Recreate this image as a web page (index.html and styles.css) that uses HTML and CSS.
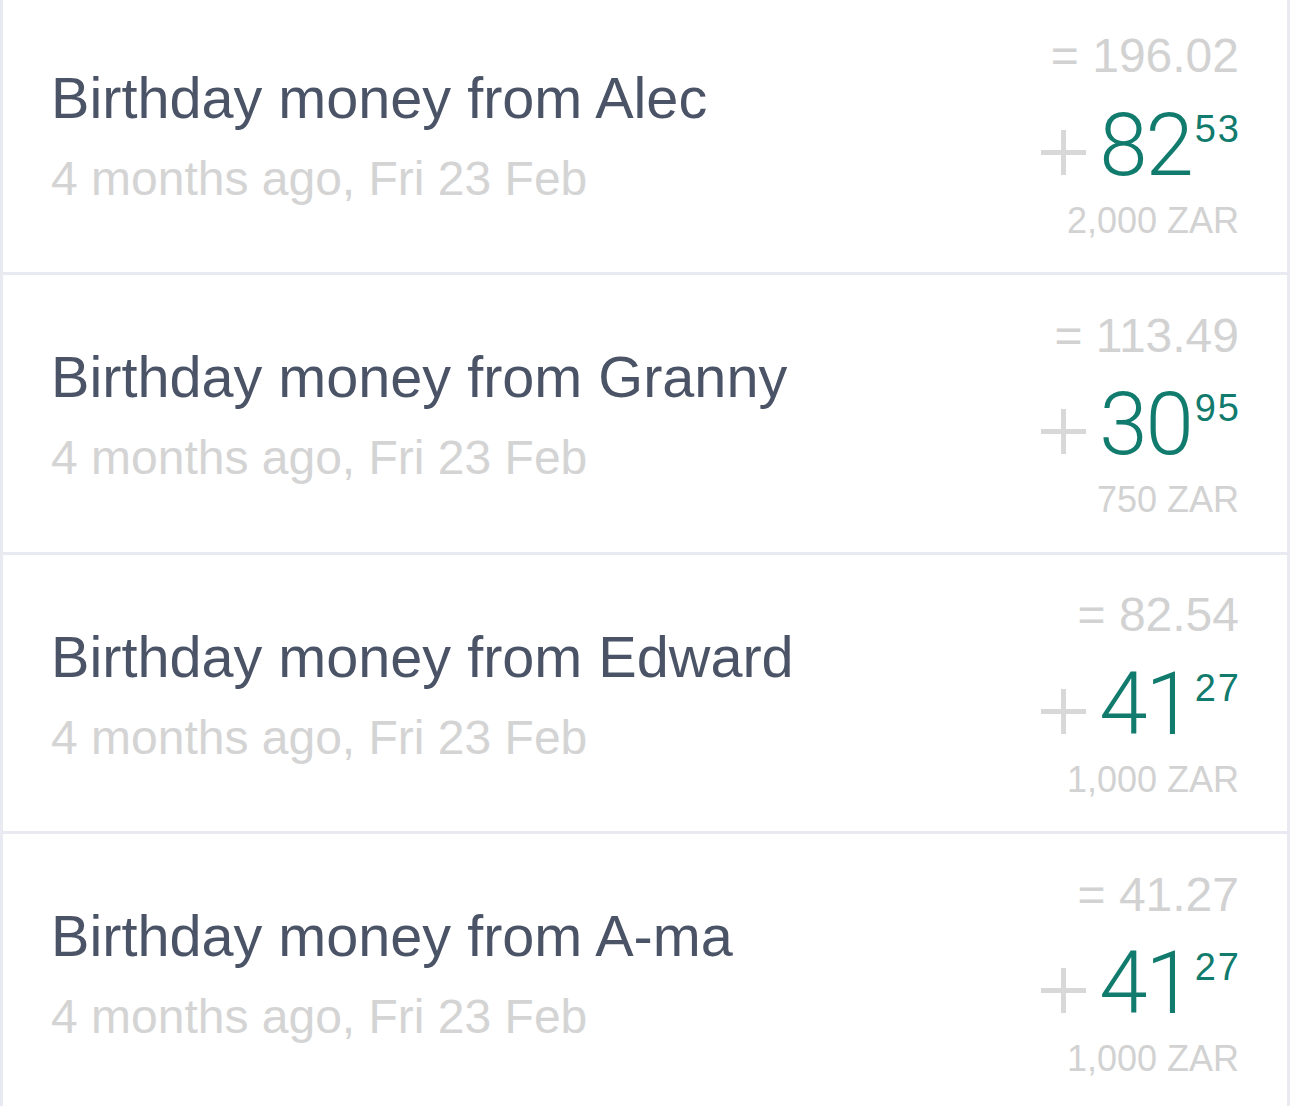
FILE: index.html
```html
<!DOCTYPE html>
<html>
<head>
  <title>transactions</title>
  <link rel="stylesheet" href="styles.css">
</head>
<body>
  <ul class="tx-list">
    <li class="tx">
      <div class="tx-info">
        <div class="tx-title">Birthday money from Alec</div>
        <div class="tx-date">4 months ago, Fri 23 Feb</div>
      </div>
      <div class="tx-amount">
        <div class="tx-total">= 196.02</div>
        <div class="tx-value">
          <svg class="plus" width="45" height="45" viewBox="0 0 45 45"><path d="M22.5 0v45M0 22.5h45"/></svg>
          <span class="whole">82</span><span class="cents">53</span>
        </div>
        <div class="tx-orig">2,000 ZAR</div>
      </div>
    </li>
    <li class="tx">
      <div class="tx-info">
        <div class="tx-title">Birthday money from Granny</div>
        <div class="tx-date">4 months ago, Fri 23 Feb</div>
      </div>
      <div class="tx-amount">
        <div class="tx-total">= 113.49</div>
        <div class="tx-value">
          <svg class="plus" width="45" height="45" viewBox="0 0 45 45"><path d="M22.5 0v45M0 22.5h45"/></svg>
          <span class="whole">30</span><span class="cents">95</span>
        </div>
        <div class="tx-orig">750 ZAR</div>
      </div>
    </li>
    <li class="tx">
      <div class="tx-info">
        <div class="tx-title">Birthday money from Edward</div>
        <div class="tx-date">4 months ago, Fri 23 Feb</div>
      </div>
      <div class="tx-amount">
        <div class="tx-total">= 82.54</div>
        <div class="tx-value">
          <svg class="plus" width="45" height="45" viewBox="0 0 45 45"><path d="M22.5 0v45M0 22.5h45"/></svg>
          <span class="whole">41</span><span class="cents">27</span>
        </div>
        <div class="tx-orig">1,000 ZAR</div>
      </div>
    </li>
    <li class="tx">
      <div class="tx-info">
        <div class="tx-title">Birthday money from A-ma</div>
        <div class="tx-date">4 months ago, Fri 23 Feb</div>
      </div>
      <div class="tx-amount">
        <div class="tx-total">= 41.27</div>
        <div class="tx-value">
          <svg class="plus" width="45" height="45" viewBox="0 0 45 45"><path d="M22.5 0v45M0 22.5h45"/></svg>
          <span class="whole">41</span><span class="cents">27</span>
        </div>
        <div class="tx-orig">1,000 ZAR</div>
      </div>
    </li>
  </ul>
</body>
</html>
```

FILE: styles.css
```css
body {
  margin: 0;
  background: #fff;
  font-family: 'Liberation Sans', Helvetica, Arial, sans-serif;
  overflow: hidden;
}

.tx-list {
  list-style: none;
  margin: -4.5px 0 0;
  padding: 0;
  border-left: 3px solid #e9eaf1;
  border-right: 3px solid #e9eaf1;
}

.tx {
  display: flex;
  justify-content: space-between;
  align-items: center;
  height: 276.5px;
  padding: 0 48px 0 48px;
  border-bottom: 3px solid #e9eaf1;
}

.tx-title {
  font-size: 57.6px;
  line-height: 89px;
  color: #4b5467;
  white-space: nowrap;
}

.tx-date {
  font-size: 48px;
  line-height: 71px;
  color: #d4d4d4;
  white-space: nowrap;
}

.tx-amount {
  display: flex;
  flex-direction: column;
  align-items: flex-end;
  padding-bottom: 4px;
}

.tx-total {
  font-size: 48px;
  line-height: 90px;
  height: 90.5px;
  color: #d2d2d2;
}

/* big figure in a light face, cents raised beside it */
.tx-value {
  display: flex;
  align-items: flex-start;
  height: 87px;
  color: #117b6d;
}

.plus {
  margin-top: 28px;
  margin-right: 13px;
  stroke: #d8d8d8;
  stroke-width: 5;
  fill: none;
}

.whole {
  font-family: Roboto, 'Liberation Sans', sans-serif;
  font-weight: 300;
  font-size: 87px;
  line-height: 87px;
  letter-spacing: -2px;
}

.cents {
  font-size: 38px;
  line-height: 38px;
  letter-spacing: 2px;
  margin-top: 8px;
  margin-left: 3px;
  margin-right: -2px;
}

.tx-orig {
  font-size: 36px;
  line-height: 64px;
  color: #d2d2d2;
}
```
